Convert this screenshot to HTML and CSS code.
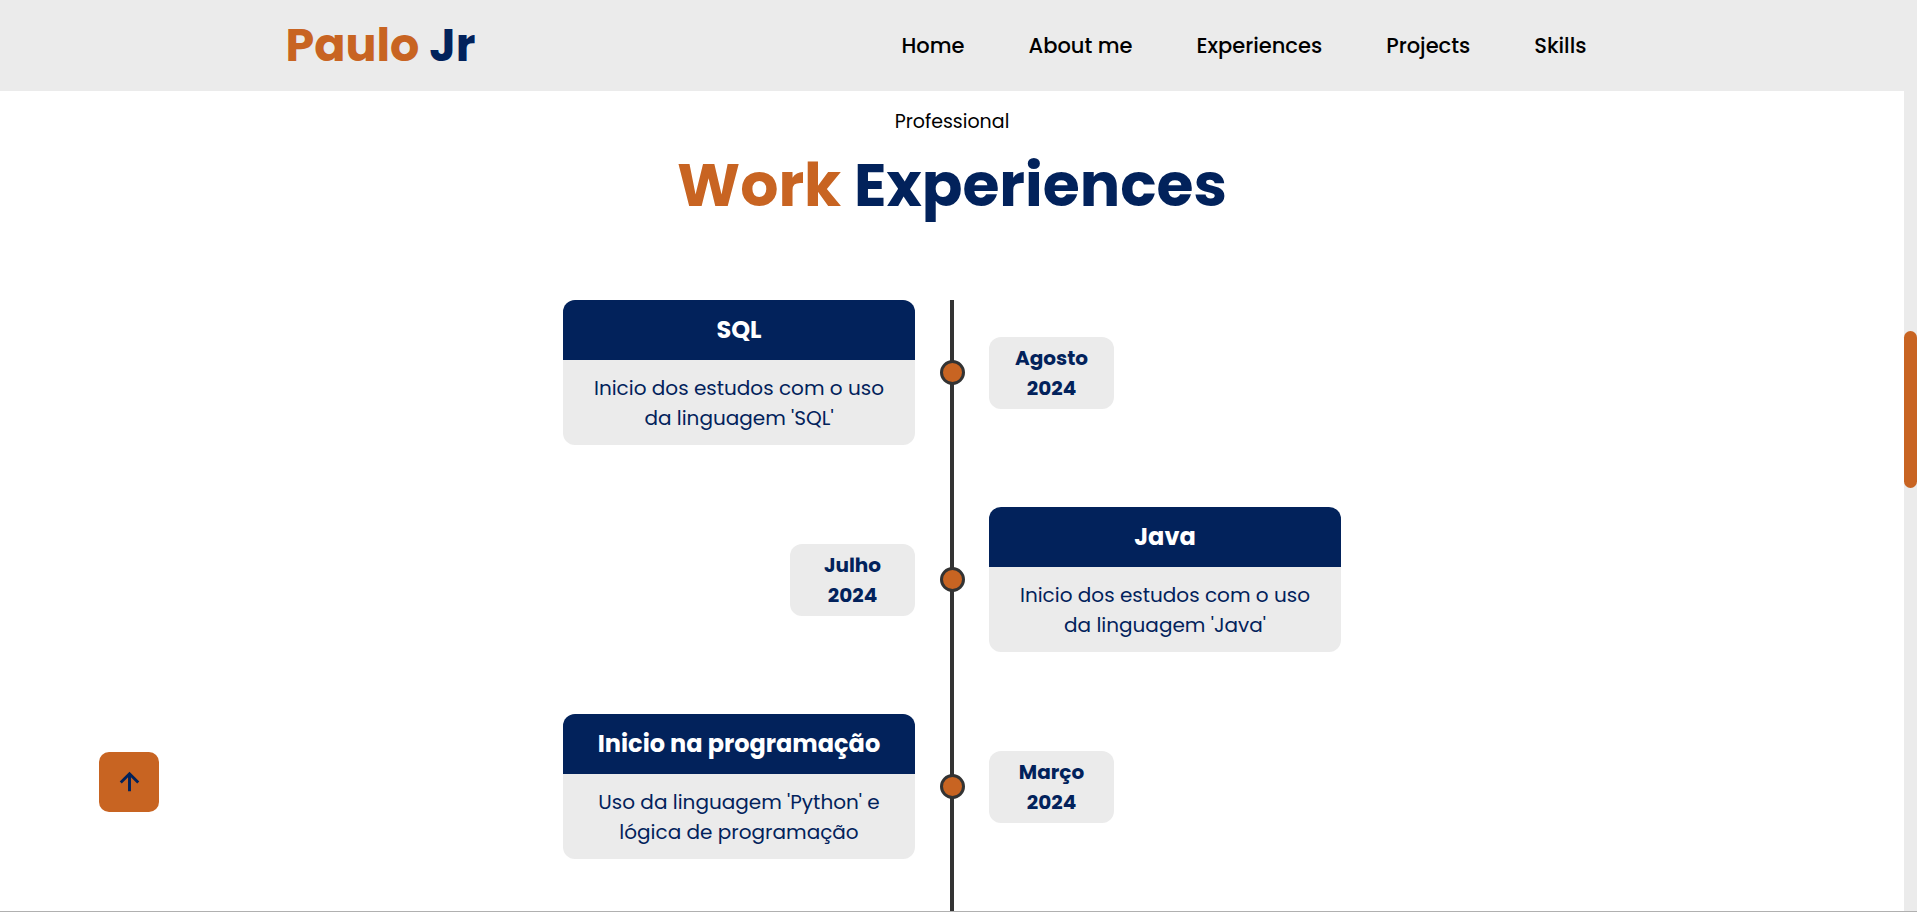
FILE: index.html
```html
<!DOCTYPE html>
<html lang="pt-BR">
<head>
<meta charset="utf-8">
<title>Paulo Jr</title>
<link rel="stylesheet" href="styles.css">
</head>
<body>
<div class="page">
  <header class="header">
    <a class="logo" href="#home"><span class="accent">Paulo</span> Jr</a>
    <nav class="nav">
      <a href="#home">Home</a>
      <a href="#about">About me</a>
      <a href="#experiences">Experiences</a>
      <a href="#projects">Projects</a>
      <a href="#skills">Skills</a>
    </nav>
  </header>
  <main class="experiences" id="experiences">
    <p class="eyebrow">Professional</p>
    <h1 class="title"><span class="accent">Work</span> Experiences</h1>
    <ol class="timeline">
      <li class="entry">
        <article class="card"><h2>SQL</h2><p>Inicio dos estudos com o uso<br>da linguagem 'SQL'</p></article>
        <span class="dot"></span>
        <time class="date" datetime="2024-08">Agosto<br>2024</time>
      </li>
      <li class="entry entry-right">
        <article class="card"><h2>Java</h2><p>Inicio dos estudos com o uso<br>da linguagem 'Java'</p></article>
        <span class="dot"></span>
        <time class="date" datetime="2024-07">Julho<br>2024</time>
      </li>
      <li class="entry">
        <article class="card"><h2>Inicio na programação</h2><p>Uso da linguagem 'Python' e<br>lógica de programação</p></article>
        <span class="dot"></span>
        <time class="date" datetime="2024-03">Março<br>2024</time>
      </li>
    </ol>
  </main>
</div>
<div class="scrollbar"><span class="thumb"></span></div>
<a class="to-top" href="#home" aria-label="Voltar ao topo">
  <svg viewBox="0 0 24 24" aria-hidden="true"><path d="M11 8.414V18h2V8.414l4.293 4.293 1.414-1.414L12 4.586l-6.707 6.707 1.414 1.414z"/></svg>
</a>
</body>
</html>
```
FILE: styles.css
```css
:root {
  --orange: #c86422;
  --navy: #02225b;
  --grey: #ebebeb;
  --line: #333333;
}

* {
  box-sizing: border-box;
  margin: 0;
  padding: 0;
}

body {
  display: flex;
  height: 100vh;
  overflow: hidden;
  border-bottom: 1px solid #b0b0b0;
  background: #fff;
  color: #000;
  font-family: Poppins, Inter, "Open Sans", sans-serif;
}

a {
  color: inherit;
  text-decoration: none;
}

.accent {
  color: var(--orange);
}

.page {
  flex: 1;
  display: flex;
  flex-direction: column;
}

.header {
  display: flex;
  align-items: center;
  justify-content: space-between;
  padding: 12px 15%;
  background: var(--grey);
}

.logo {
  color: var(--navy);
  font-size: 46px;
  line-height: 67px;
  font-weight: 700;
}

.nav {
  display: flex;
}

.nav a {
  padding: 0 32px;
  font-size: 21px;
  line-height: 30px;
  font-weight: 500;
}

.experiences {
  flex: 1;
  display: flex;
  flex-direction: column;
  align-items: center;
  padding-top: 17px;
}

.eyebrow {
  font-size: 19px;
  line-height: 28px;
}

.title {
  margin: 4px 0 70px;
  color: var(--navy);
  font-size: 60px;
  line-height: 90px;
  font-weight: 700;
}

.timeline {
  flex: 1;
  display: flex;
  flex-direction: column;
  gap: 62px;
  list-style: none;
  background: linear-gradient(var(--line), var(--line)) center / 4px 100% no-repeat;
}

.entry {
  display: grid;
  grid-template-columns: 352px 74px 352px;
  align-items: center;
}

.entry > * {
  grid-row: 1;
}

.card {
  grid-column: 1;
  overflow: hidden;
  border-radius: 12px;
  background: var(--grey);
  color: var(--navy);
  text-align: center;
}

.card h2 {
  padding: 12px;
  background: var(--navy);
  color: #fff;
  font-size: 24px;
  line-height: 36px;
  font-weight: 700;
}

.card p {
  padding: 13px 12px 12px;
  font-size: 20px;
  line-height: 30px;
}

.dot {
  grid-column: 2;
  justify-self: center;
  width: 25px;
  height: 25px;
  border: 3px solid var(--line);
  border-radius: 50%;
  background: var(--orange);
}

.date {
  grid-column: 3;
  justify-self: start;
  width: 125px;
  padding: 6px;
  border-radius: 12px;
  background: var(--grey);
  color: var(--navy);
  font-size: 20px;
  line-height: 30px;
  font-weight: 700;
  text-align: center;
}

.entry-right .card {
  grid-column: 3;
}

.entry-right .date {
  grid-column: 1;
  justify-self: end;
}

.scrollbar {
  display: flex;
  flex-direction: column;
  width: 13px;
  background: var(--grey);
}

.scrollbar::before {
  content: "";
  flex: 331;
}

.scrollbar::after {
  content: "";
  flex: 423;
}

.thumb {
  flex: 157;
  border-radius: 7px;
  background: var(--orange);
}

.to-top {
  position: fixed;
  bottom: 100px;
  left: 99px;
  display: grid;
  place-items: center;
  width: 60px;
  height: 60px;
  border-radius: 10px;
  background: var(--orange);
}

.to-top svg {
  width: 35px;
  height: 35px;
  fill: var(--navy);
}
```
